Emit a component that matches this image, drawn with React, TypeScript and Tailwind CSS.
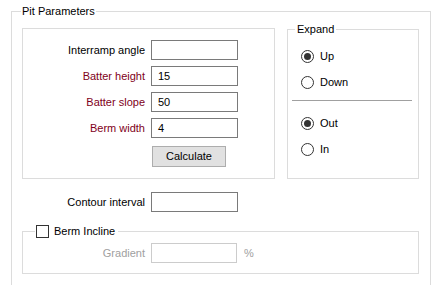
import React from "react";

type RowProps = {
  label: string;
  value?: string;
  labelClass?: string;
  labelWidth: string;
};

const InputRow = ({ label, value, labelClass, labelWidth }: RowProps) => {
  return (
    <div className="flex items-center h-[20px]">
      <span className={`${labelWidth} text-right ${labelClass ?? "text-black"}`}>{label}</span>
      <div className="ml-[6px] w-[87px] h-[20px] border border-[#7a7a7a] bg-white pl-[6px] flex items-center">
        {value}
      </div>
    </div>
  );
};

const Radio = ({ label, checked }: { label: string; checked?: boolean }) => {
  return (
    <div className="flex items-center h-[16px] pl-[13px]">
      <div className="w-[13px] h-[13px] rounded-full border border-[#333333] bg-white flex items-center justify-center">
        {checked && <div className="w-[7px] h-[7px] rounded-full bg-[#333333]" />}
      </div>
      <span className="ml-[6px]">{label}</span>
    </div>
  );
};

const App = () => {
  return (
    <div className="w-[438px] h-[285px] bg-white overflow-hidden text-[11px] leading-[15px] text-black font-['Liberation_Sans',Arial,sans-serif]">
      <fieldset className="ml-[11px] mt-[4px] w-[420px] h-[300px] border border-[#dcdcdc] pl-[10px] pr-[11px] pt-[3px]">
        <legend className="ml-[-1px] px-[1px]">Pit Parameters</legend>

        <div className="flex gap-[12px] items-start">
          {/* left parameters group */}
          <div className="mt-[6px] w-[253px] h-[151px] border border-[#dcdcdc] pt-[11px] flex flex-col gap-[6px]">
            <InputRow label="Interramp angle" labelWidth="w-[122px]" />
            <InputRow label="Batter height" value="15" labelWidth="w-[122px]" labelClass="text-[#800020]" />
            <InputRow label="Batter slope" value="50" labelWidth="w-[122px]" labelClass="text-[#800020]" />
            <InputRow label="Berm width" value="4" labelWidth="w-[122px]" labelClass="text-[#800020]" />
            <div className="mt-[2px] ml-[129px] w-[74px] h-[21px] bg-[#e1e1e1] border border-[#adadad] flex items-center justify-center">
              Calculate
            </div>
          </div>

          {/* expand group */}
          <fieldset className="w-[132px] h-[157px] border border-[#dcdcdc] pl-[7px]">
            <legend className="px-[2px]">Expand</legend>
            <div className="ml-[-7px] pt-[11px] flex flex-col">
              <Radio label="Up" checked />
              <div className="mt-[10px]">
                <Radio label="Down" />
              </div>
              <div className="mt-[10px] ml-[4px] mr-[6px] h-px bg-[#a0a0a0]" />
              <div className="mt-[14px]">
                <Radio label="Out" checked />
              </div>
              <div className="mt-[10px]">
                <Radio label="In" />
              </div>
            </div>
          </fieldset>
        </div>

        <div className="mt-[13px]">
          <InputRow label="Contour interval" labelWidth="w-[123px]" />
        </div>

        <fieldset className="mt-[12px] w-[397px] h-[50px] border border-[#dcdcdc] pl-[12px]">
          <legend className="px-[1px] flex items-center">
            <div className="w-[13px] h-[13px] border border-[#333333] bg-white" />
            <span className="ml-[5px] pr-[2px]">Berm Incline</span>
          </legend>
          <div className="ml-[-12px] pt-[4px] flex items-center h-[24px]">
            <span className="w-[122px] text-right text-[#a0a0a0]">Gradient</span>
            <div className="ml-[6px] w-[86px] h-[20px] border border-[#cccccc] bg-white" />
            <span className="ml-[7px] text-[#a0a0a0]">%</span>
          </div>
        </fieldset>
      </fieldset>
    </div>
  );
};

export default App;
